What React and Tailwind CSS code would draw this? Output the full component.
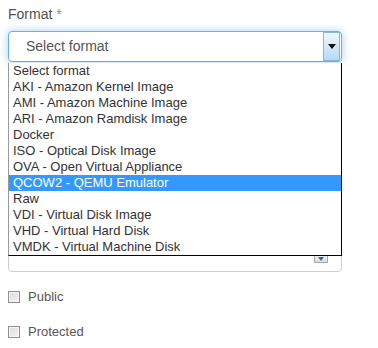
import React from 'react';

const FORMATS = [
  'Select format',
  'AKI - Amazon Kernel Image',
  'AMI - Amazon Machine Image',
  'ARI - Amazon Ramdisk Image',
  'Docker',
  'ISO - Optical Disk Image',
  'OVA - Open Virtual Appliance',
  'QCOW2 - QEMU Emulator',
  'Raw',
  'VDI - Virtual Disk Image',
  'VHD - Virtual Hard Disk',
  'VMDK - Virtual Machine Disk',
];

function Checkbox({ label }) {
  return (
    <label className="flex items-center h-[20px] gap-[8px]">
      <span className="w-[12px] h-[12px] border border-[#8f8f8f] bg-gradient-to-br from-[#dcdcdc] to-[#f4f4f4] shadow-[inset_0_0_0_1px_#f5f5f5]" />
      <span className="text-[13px] text-[#555]">{label}</span>
    </label>
  );
}

export default function App() {
  const selected = 'QCOW2 - QEMU Emulator';

  return (
    <div className="w-[378px] h-[348px] bg-white px-[8px] pt-[5px] font-['Liberation_Sans',Arial,sans-serif] overflow-hidden">
      {/* Label */}
      <div className="text-[14px] leading-[18px] text-[#505050] mb-[8px]">
        Format <span className="text-[#7a94ad]">*</span>
      </div>

      {/* Open select */}
      <div className="relative w-[334px]">
        <div className="h-[31px] rounded-[4px] border border-[#66afe9] shadow-[0_0_8px_rgba(102,175,233,0.6)] bg-white flex items-center">
          <span className="flex-1 pl-[17px] text-[14px] text-[#555]">Select format</span>
          <span className="w-[17px] h-[29px] mr-[1px] border border-[#8ab6dc] bg-gradient-to-b from-[#f2f8fd] to-[#b4d9f6] flex items-center justify-center">
            <svg width="8" height="5" viewBox="0 0 8 5">
              <path d="M0 0h8L4 5z" fill="#111" />
            </svg>
          </span>
        </div>

        {/* Dropdown list */}
        <div className="absolute left-0 top-[32px] w-[334px] bg-white border-l border-l-[#9a9a9a] border-r border-r-black border-b border-b-black z-10">
          {FORMATS.map(f => (
            <div
              key={f}
              className={`h-[16px] leading-[16px] pl-[4px] text-[13px] ${f === selected ? 'bg-[#3399ff] text-white' : 'text-[#333]'}`}
            >
              {f}
            </div>
          ))}
        </div>

        {/* Select hidden behind the list */}
        <div className="mt-[179px] h-[31px] rounded-[4px] border border-[#cfcfcf] bg-white flex items-end justify-end pr-[13px] pb-[8px]">
          <span className="w-[14px] h-[9px] border border-[#a8a8a8] bg-gradient-to-b from-[#f4f4f4] to-[#dcdcdc] flex items-center justify-center">
            <svg width="6" height="4" viewBox="0 0 6 4">
              <path d="M0 0h6L3 4z" fill="#3b5fc2" />
            </svg>
          </span>
        </div>
      </div>

      {/* Checkboxes */}
      <div className="mt-[15px] flex flex-col gap-[15px]">
        <Checkbox label="Public" />
        <Checkbox label="Protected" />
      </div>
    </div>
  );
}
